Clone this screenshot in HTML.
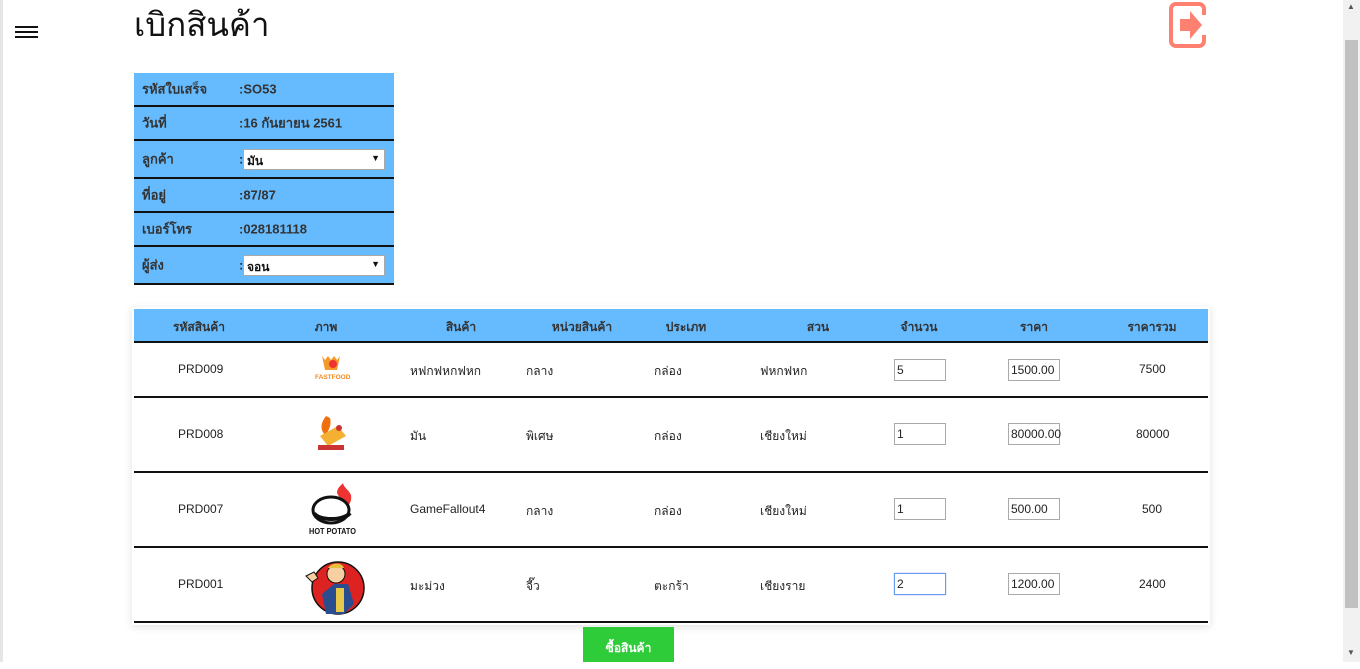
<!DOCTYPE html>
<html><head><meta charset="utf-8">
<style>
*{margin:0;padding:0;box-sizing:border-box}
html,body{width:1360px;height:662px;overflow:hidden;background:#fff;font-family:"Liberation Sans","Noto Sans CJK SC",sans-serif;font-size:12px;color:#222}
.a{position:absolute;white-space:nowrap}
.ham{position:absolute;left:15px;width:23px;height:1.5px;background:#111}
.info{position:absolute;left:134px;width:260px;background:#66bbff;border-bottom:2px solid #111;font-weight:bold;color:#333;font-size:13px}
.info span{position:absolute;top:50%;transform:translateY(-50%)}
.sel{position:absolute;left:109px;width:142px;height:21px;background:#fff;border:1px solid #aaa;font-weight:bold;font-size:12px;padding:2px 3px;color:#111}
.sel:after{content:"▼";position:absolute;right:4px;top:3px;font-size:9px}
.row{position:absolute;left:134px;width:1074px;border-bottom:2px solid #111;background:#fff}
.inp{position:absolute;width:52px;height:22px;border:1px solid #aaa;background:#fff;font-size:12px;padding:3px 2px;color:#222}
.c{transform:translateX(-50%)}
</style></head><body>
<div style="position:absolute;left:0;top:0;width:3px;height:662px;background:#e6e6e6"></div>
<div class="ham" style="top:26px"></div><div class="ham" style="top:31px"></div><div class="ham" style="top:36px"></div>
<div class="a" style="left:134px;top:-2px;font-size:33px;color:#111">เบิกสินค้า</div>
<svg class="a" style="left:1168px;top:1px" width="40" height="48" viewBox="0 0 40 48"><path d="M36 14V8a5 5 0 0 0-5-5H8a5 5 0 0 0-5 5v32a5 5 0 0 0 5 5h23a5 5 0 0 0 5-5v-6" fill="none" stroke="#fd8070" stroke-width="4"/><path d="M12 18h10v-8l12 14-12 14v-8H12z" fill="#fd8070"/></svg>
<div style="position:absolute;left:1343px;top:0;width:17px;height:662px;background:#f1f1f1"></div>
<div style="position:absolute;left:1345px;top:40px;width:13px;height:568px;background:#c1c1c1"></div>
<div class="a" style="left:1347px;top:2px;font-size:8px;color:#555">▲</div>
<div class="a" style="left:1347px;top:648px;font-size:8px;color:#555">▼</div>

<div class="info" style="top:73px;height:34px"><span style="left:8px">รหัสใบเสร็จ</span><span style="left:105px">:SO53</span></div>
<div class="info" style="top:107px;height:34px"><span style="left:8px">วันที่</span><span style="left:105px">:16 กันยายน 2561</span></div>
<div class="info" style="top:141px;height:38px"><span style="left:8px">ลูกค้า</span><span style="left:105px">:</span><div class="sel" style="top:8px">มัน</div></div>
<div class="info" style="top:179px;height:34px"><span style="left:8px">ที่อยู่</span><span style="left:105px">:87/87</span></div>
<div class="info" style="top:213px;height:34px"><span style="left:8px">เบอร์โทร</span><span style="left:105px">:028181118</span></div>
<div class="info" style="top:247px;height:38px"><span style="left:8px">ผู้ส่ง</span><span style="left:105px">:</span><div class="sel" style="top:8px">จอน</div></div>

<div style="position:absolute;left:132px;top:307px;width:1078px;height:318px;box-shadow:0 2px 8px rgba(0,0,0,.12)"></div>
<div class="row" style="top:309px;height:34px;background:#66bbff;font-weight:bold;color:#333">
<span class="a c" style="left:65px;top:9px">รหัสสินค้า</span><span class="a c" style="left:192px;top:9px">ภาพ</span><span class="a c" style="left:327px;top:9px">สินค้า</span><span class="a c" style="left:448px;top:9px">หน่วยสินค้า</span><span class="a c" style="left:552px;top:9px">ประเภท</span><span class="a c" style="left:684px;top:9px">สวน</span><span class="a c" style="left:785px;top:9px">จำนวน</span><span class="a c" style="left:900px;top:9px">ราคา</span><span class="a c" style="left:1018px;top:9px">ราคารวม</span></div>

<div class="row" style="top:343px;height:55px"></div>
<div class="row" style="top:398px;height:75px"></div>
<div class="row" style="top:473px;height:75px"></div>
<div class="row" style="top:548px;height:75px"></div>

<div class="a" style="left:178px;top:362px">PRD009</div><div class="a" style="left:410px;top:362px">หฟกฟหกฟหก</div><div class="a" style="left:526px;top:362px">กลาง</div><div class="a" style="left:654px;top:362px">กล่อง</div><div class="a" style="left:760px;top:362px">ฟหกฟหก</div>
<div class="inp" style="left:894px;top:359px">5</div><div class="inp" style="left:1008px;top:359px">1500.00</div><div class="a" style="left:1139px;top:362px">7500</div>

<div class="a" style="left:178px;top:427px">PRD008</div><div class="a" style="left:410px;top:427px">มัน</div><div class="a" style="left:526px;top:427px">พิเศษ</div><div class="a" style="left:654px;top:427px">กล่อง</div><div class="a" style="left:760px;top:427px">เชียงใหม่</div>
<div class="inp" style="left:894px;top:423px">1</div><div class="inp" style="left:1008px;top:423px">80000.00</div><div class="a" style="left:1136px;top:427px">80000</div>

<div class="a" style="left:178px;top:502px">PRD007</div><div class="a" style="left:410px;top:502px">GameFallout4</div><div class="a" style="left:526px;top:502px">กลาง</div><div class="a" style="left:654px;top:502px">กล่อง</div><div class="a" style="left:760px;top:502px">เชียงใหม่</div>
<div class="inp" style="left:894px;top:498px">1</div><div class="inp" style="left:1008px;top:498px">500.00</div><div class="a" style="left:1142px;top:502px">500</div>

<div class="a" style="left:178px;top:577px">PRD001</div><div class="a" style="left:410px;top:577px">มะม่วง</div><div class="a" style="left:526px;top:577px">จี๊ว</div><div class="a" style="left:654px;top:577px">ตะกร้า</div><div class="a" style="left:760px;top:577px">เชียงราย</div>
<div class="inp" style="left:894px;top:573px;border:1px solid #6a9cf0;box-shadow:0 0 1px #6a9cf0">2</div><div class="inp" style="left:1008px;top:573px">1200.00</div><div class="a" style="left:1139px;top:577px">2400</div>

<svg class="a" style="left:313px;top:353px" width="40" height="30"><path d="M9 3l3 4 3-4 3 4 3-4 3 4 3-4-3 14H12z" fill="#f59a2a"/><circle cx="20" cy="11" r="4" fill="#e33"/><text x="2" y="26" font-size="6.5" font-weight="bold" fill="#f08a20" font-family="Liberation Sans">FASTFOOD</text></svg>
<svg class="a" style="left:314px;top:414px" width="40" height="42"><path d="M12 2c-6 8-6 14 0 20 2-6 6-10 4-18z" fill="#f07010"/><path d="M6 22l18-10 8 10-18 10z" fill="#f4b030"/><circle cx="25" cy="14" r="3" fill="#c33"/><rect x="4" y="31" width="26" height="5" fill="#c33"/></svg>
<svg class="a" style="left:307px;top:483px" width="52" height="55"><path d="M30 10c0-6 5-8 6-10 1 5 5 6 8 12 1 6-2 12-6 12z" fill="#e33"/><ellipse cx="24" cy="27" rx="18" ry="13" fill="#fff" stroke="#111" stroke-width="3"/><path d="M7 30c4 8 30 8 36 0" stroke="#111" stroke-width="4" fill="none"/><text x="2" y="51" font-size="8" font-weight="bold" fill="#111" font-family="Liberation Sans" textLength="47" lengthAdjust="spacingAndGlyphs">HOT POTATO</text></svg>
<svg class="a" style="left:302px;top:556px" width="64" height="60"><circle cx="36" cy="32" r="26" fill="#d22" stroke="#111" stroke-width="1.5"/><path d="M20 38l12-10h14l6 20-10 10H24z" fill="#2a4d90"/><path d="M34 32h8v24h-8z" fill="#e8c84a"/><circle cx="34" cy="18" r="9" fill="#f6d0a0" stroke="#111"/><path d="M26 12c4-6 14-6 16 0z" fill="#e8c040"/><path d="M4 20l8-4 4 6-6 4z" fill="#f6d0a0" stroke="#111"/></svg>

<div style="position:absolute;left:583px;top:627px;width:91px;height:35px;background:#2fcc3a;color:#fff;font-weight:bold;font-size:12px;text-align:center;line-height:42px">ซื้อสินค้า</div>
</body></html>
